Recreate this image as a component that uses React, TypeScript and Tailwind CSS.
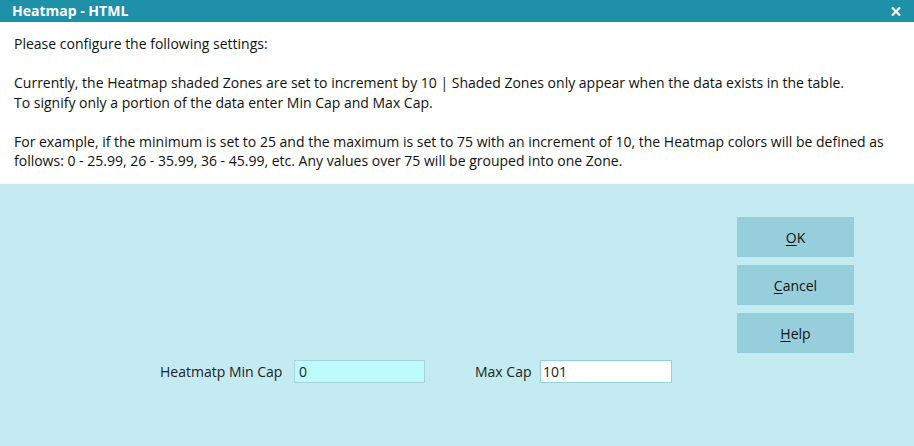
export default function App() {
  return (
    <div
      className="w-[914px] h-[446px] flex flex-col bg-[#c4eaf2] text-[#000] overflow-hidden"
      style={{ fontFamily: '"Open Sans", "Noto Sans", sans-serif' }}
    >
      {/* Title bar */}
      <div className="h-[22px] bg-[#1e90a8] flex items-center justify-between pl-[12px] pr-[13px]">
        <span className="text-white font-bold text-[14px] leading-none">Heatmap - HTML</span>
        <svg width="10" height="9" viewBox="0 0 10 9">
          <path d="M1 0.5 L9 8.5 M9 0.5 L1 8.5" stroke="#fff" strokeWidth="2.2" />
        </svg>
      </div>

      {/* Description */}
      <div className="h-[162px] bg-white pl-[14px] pr-[10px] pt-[12px] text-[14px] leading-[19.5px] text-[#111] whitespace-nowrap">
        <p>Please configure the following settings:</p>
        <p className="mt-[19.5px]">
          Currently, the Heatmap shaded Zones are set to increment by 10 | Shaded Zones only appear when the data exists in the table.
        </p>
        <p>To signify only a portion of the data enter Min Cap and Max Cap.</p>
        <p className="mt-[19.5px]">
          For example, if the minimum is set to 25 and the maximum is set to 75 with an increment of 10, the Heatmap colors will be defined as
          <br />
          follows: 0 - 25.99, 26 - 35.99, 36 - 45.99, etc. Any values over 75 will be grouped into one Zone.
        </p>
      </div>

      {/* Form area */}
      <div className="flex-1 relative">
        <div className="flex flex-col gap-[8px] absolute left-[737px] top-[33px]">
          {[
            ["O", "K"],
            ["C", "ancel"],
            ["H", "elp"],
          ].map(([u, rest]) => (
            <button
              key={u + rest}
              className="w-[117px] h-[40px] bg-[#96cfdb] text-[14px] text-[#111] flex items-center justify-center"
            >
              <span className="underline underline-offset-2">{u}</span>
              {rest}
            </button>
          ))}
        </div>

        <div className="absolute left-[160px] top-[176px] flex items-center text-[14px] text-[#222]">
          <span className="w-[134px]">Heatmatp Min Cap</span>
          <div className="w-[131px] h-[23px] bg-[#bdfcfc] border border-[#a9d3dc] flex items-center pl-[4px] text-[14px]">0</div>
          <span className="ml-[50px] w-[65px]">Max Cap</span>
          <div className="w-[132px] h-[23px] bg-white border border-[#8fd3e0] flex items-center pl-[2px] text-[14px]">101</div>
        </div>
      </div>
    </div>
  );
}
